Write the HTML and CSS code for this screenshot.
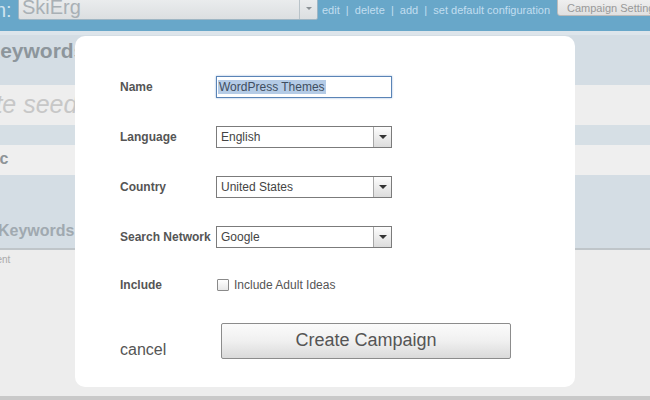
FILE: index.html
```html
<!DOCTYPE html>
<html>
<head>
<meta charset="utf-8">
<link rel="stylesheet" href="styles.css">
</head>
<body>
<div class="page">
  <div class="topbar">
    <span class="tb-label">n:</span>
    <div class="tb-select">
      <span class="tb-value">SkiErg</span>
      <span class="tb-arrow"><span class="tri small"></span></span>
    </div>
    <div class="tb-links">edit &nbsp;|&nbsp; delete &nbsp;|&nbsp; add &nbsp;|&nbsp; set default configuration</div>
    <div class="tb-button">Campaign Settings</div>
  </div>
  <div class="stripe"></div>
  <div class="row r1"><span class="heading">Keywords</span></div>
  <div class="row r2"><span class="seed">Generate seed keywords</span></div>
  <div class="row r3"></div>
  <div class="row r4"><span class="sub">Topic</span></div>
  <div class="row r5"><span class="sub2">Keywords</span></div>
  <div class="row r6"><span class="note">Management</span></div>
  <div class="row r7"></div>

  <div class="modal">
    <div class="form">
      <div class="frow">
        <div class="flabel">Name</div>
        <div class="finput focus"><span class="sel">WordPress Themes</span></div>
      </div>
      <div class="frow">
        <div class="flabel">Language</div>
        <div class="finput select"><span class="val">English</span><span class="arrow"><span class="tri"></span></span></div>
      </div>
      <div class="frow">
        <div class="flabel">Country</div>
        <div class="finput select"><span class="val">United States</span><span class="arrow"><span class="tri"></span></span></div>
      </div>
      <div class="frow">
        <div class="flabel">Search Network</div>
        <div class="finput select"><span class="val">Google</span><span class="arrow"><span class="tri"></span></span></div>
      </div>
      <div class="frow include">
        <div class="flabel">Include</div>
        <div class="check"><span class="box"></span><span class="ctext">Include Adult Ideas</span></div>
      </div>
      <div class="footer">
        <div class="cancel">cancel</div>
        <div class="create">Create Campaign</div>
      </div>
    </div>
  </div>
</div>
</body>
</html>
```

FILE: styles.css
```css
* { box-sizing: border-box; }
html, body { margin: 0; padding: 0; }
body {
  width: 650px;
  height: 400px;
  overflow: hidden;
  font-family: "Liberation Sans", Arial, sans-serif;
  background: #ededed;
}
.page {
  position: relative;
  width: 650px;
  height: 400px;
  display: flex;
  flex-direction: column;
}
.topbar {
  height: 31px;
  background: #68a7c9;
  display: flex;
  align-items: flex-start;
  flex-shrink: 0;
  overflow: hidden;
}
.tb-label {
  color: #cfe3ef;
  font-size: 20px;
  line-height: 20px;
  margin-left: -5px;
  width: 23px;
  flex-shrink: 0;
}
.tb-select {
  width: 300px;
  height: 27px;
  margin-top: -7px;
  background: linear-gradient(#eef0f1, #dcdfe1);
  border: 1px solid #9fb6c4;
  border-radius: 2px;
  display: flex;
  flex-shrink: 0;
}
.tb-value {
  flex: 1;
  color: #a9b0b5;
  font-size: 20px;
  line-height: 24px;
  padding-left: 3px;
  padding-top: 1px;
}
.tb-arrow {
  width: 18px;
  border-left: 1px solid #b9c3c9;
  display: flex;
  align-items: center;
  justify-content: center;
  padding-top: 4px;
}
.tb-links {
  color: #c2def0;
  font-size: 11px;
  line-height: 12px;
  margin-left: 4px;
  margin-top: 4px;
  white-space: nowrap;
  width: 235px;
  flex-shrink: 0;
}
.tb-button {
  margin-top: -4px;
  height: 20px;
  padding: 5px 0 0 9px;
  width: 120px;
  flex-shrink: 0;
  background: linear-gradient(#f2f2f2, #e0e0e0);
  border: 1px solid #bbb;
  border-radius: 3px;
  color: #999;
  font-size: 11px;
  white-space: nowrap;
}
.stripe { height: 4px; background: #dde5eb; flex-shrink: 0; }
.row { flex-shrink: 0; overflow: hidden; white-space: nowrap; }
.r1 { height: 50px; background: #d4dde4; }
.heading {
  display: block;
  margin: 4px 0 0 -15px;
  font-weight: bold;
  font-size: 21px;
  color: #8d969c;
}
.r2 { height: 40px; background: #eeeeee; }
.seed {
  display: block;
  margin: 5px 0 0 -88px;
  font-style: italic;
  font-size: 25px;
  color: #c7c7c7;
}
.r3 { height: 20px; background: #d6dfe5; }
.r4 { height: 30px; background: #efefef; }
.sub {
  display: block;
  margin: 5px 0 0 -33px;
  font-weight: bold;
  font-size: 16px;
  color: #8e9498;
}
.r5 {
  height: 75px;
  background: #d4dde4;
  border-bottom: 2px solid #bfc5c9;
}
.sub2 {
  display: block;
  margin: 47px 0 0 -2px;
  font-weight: bold;
  font-size: 16px;
  color: #a0a9b0;
}
.r6 { flex: 1; background: #ededed; }
.note {
  display: block;
  margin: 4px 0 0 -48px;
  font-size: 10px;
  color: #aaa;
}
.r7 { height: 4px; background: #c9c9c9; }

.modal {
  position: absolute;
  left: 75px;
  top: 36px;
  width: 500px;
  height: 351px;
  background: #fff;
  border-radius: 10px;
  padding: 40px 0 0 45px;
}
.form { display: flex; flex-direction: column; gap: 28px; }
.frow { display: flex; align-items: center; height: 22px; }
.flabel {
  width: 96px;
  font-size: 12px;
  font-weight: bold;
  color: #555;
  white-space: nowrap;
}
.finput {
  width: 176px;
  height: 22px;
  border: 1px solid #7b7b7b;
  background: #fff;
  font-size: 12px;
  color: #444;
  display: flex;
  align-items: center;
}
.finput.focus {
  border: 1px solid #5a84b6;
  box-shadow: 0 0 2px #9db9dc;
  padding-left: 1px;
}
.sel {
  background: #b4cbe6;
  color: #3f4e60;
  line-height: 14px;
  padding: 0 1px;
}
.select .val { flex: 1; padding-left: 4px; }
.arrow {
  width: 18px;
  height: 100%;
  border-left: 1px solid #a8a8a8;
  background: linear-gradient(#fdfdfd, #dcdcdc);
  display: flex;
  align-items: center;
  justify-content: center;
}
.tri {
  width: 0;
  height: 0;
  border-left: 4px solid transparent;
  border-right: 4px solid transparent;
  border-top: 4px solid #333;
}
.tri.small { border-top-color: #8a9094; border-left-width: 3px; border-right-width: 3px; border-top-width: 3px; }
.include { margin-top: -2px; }
.check { display: flex; align-items: center; margin-left: 1px; }
.box {
  width: 12px;
  height: 12px;
  border: 1px solid #8a8a8a;
  border-radius: 1px;
  background: linear-gradient(#ffffff, #e8e8e8);
}
.ctext { margin-left: 5px; font-size: 12px; color: #555; }
.footer {
  display: flex;
  align-items: flex-end;
  margin-top: -1px;
}
.cancel {
  width: 101px;
  font-size: 16px;
  line-height: 18px;
  color: #555;
}
.create {
  width: 290px;
  height: 36px;
  border: 1px solid #8c8c8c;
  border-radius: 2px;
  background: linear-gradient(#fbfbfb, #f0f0f0 50%, #dadada);
  color: #555;
  font-size: 18px;
  display: flex;
  align-items: center;
  justify-content: center;
  padding-bottom: 2px;
}
```
